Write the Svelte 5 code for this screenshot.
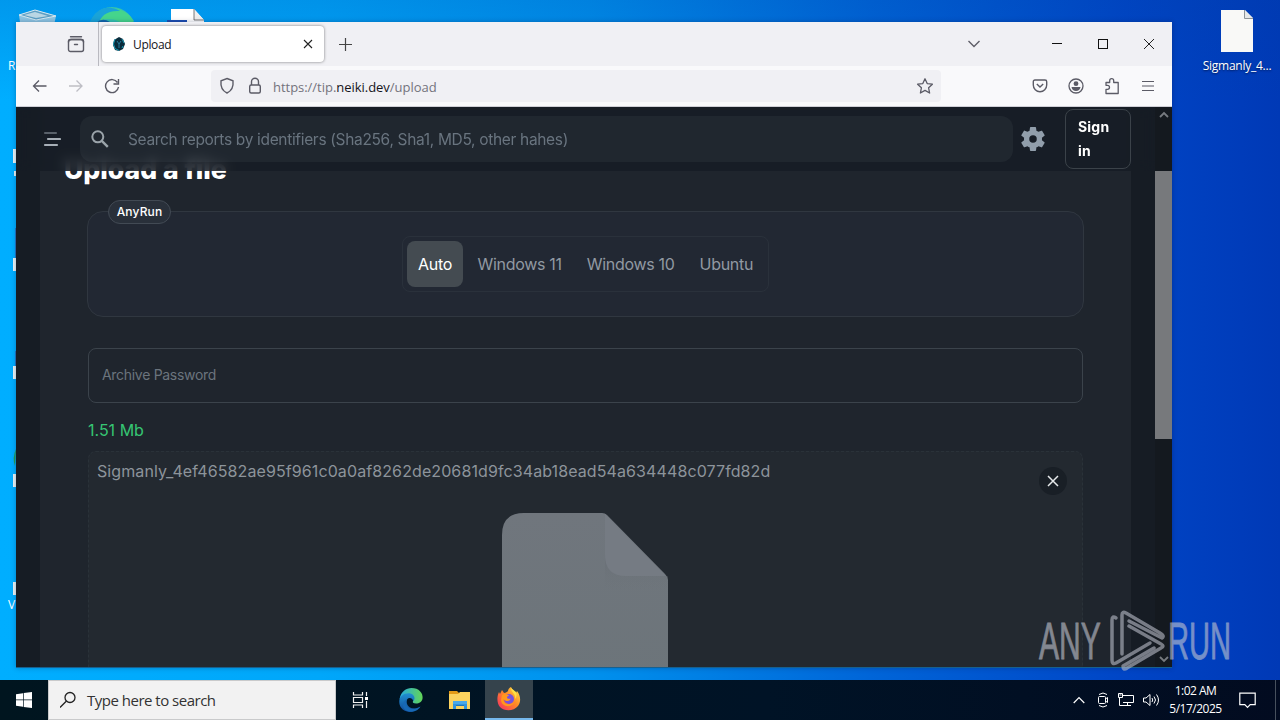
<script>
  let search = $state("");
  let password = $state("");
  let selected = $state("Auto");

  const systems = ["Auto", "Windows 11", "Windows 10", "Ubuntu"];
  const file = {
    size: "1.51 Mb",
    name: "Sigmanly_4ef46582ae95f961c0a0af8262de20681d9fc34ab18ead54a634448c077fd82d",
  };
</script>

<div class="screen">
  <div class="desktop">
    <svg class="shortcuts" width="220" height="680" viewBox="0 0 220 680">
      <path d="M19 15l16-5 21 6-3 14H21z" fill="#8fc6e3" />
      <path d="M19 15l16-5 21 6-20 4z" fill="#5d9fc4" stroke="#d5e9f2" />
      <path d="M24 15l11-3 13 4-12 2z" fill="#b9d6e4" />
      <circle cx="112" cy="30" r="23" fill="#35c3b0" />
      <path d="M90 25c6-20 32-23 44-4l-8 6c-7-8-20-12-36-2z" fill="#45d58c" />
      <path d="M89 28c2-18 18-25 31-17-12-1-20 4-22 15z" fill="#1aa3d8" />
      <path d="M96 23q6-6 14-1v6H94z" fill="#1267ad" />
      <path d="M171 9h23l10 11v10h-33z" fill="#fff" />
      <path d="M194 9v11h10" fill="#eee" stroke="#444" stroke-width=".7" />
      <path d="M167 20h20v8h-20z" fill="#1d4fb3" />
      <path d="M13 149h3v14h-3zM14 171h2v5h-2zM13 258h3v13h-3zM13 366h3v13h-3zM13 474h3v13h-3zM13 582h3v13h-3z" fill="#e9f3f5" />
      <path d="M16 449q-4 9-1 17z" fill="#269b56" />
      <path d="M15 228h1v30h-1zM15 351h1v15h-1z" fill="#2374c8" />
    </svg>
    <span class="cut-label first">R</span>
    <span class="cut-label last">V</span>

    <div class="desk-file">
      <svg width="33" height="42" viewBox="0 0 33 42">
        <path d="M0 0h24l8 8v34H0z" fill="#f9f9f7" />
        <path d="M23.500 0v8.500h8.500" fill="#e6e8e8" stroke="#8d9398" />
      </svg>
      <span>Sigmanly_4...</span>
    </div>

    <div class="window">
      <div class="tabbar">
        <div class="recent">
          <svg width="18" height="18" viewBox="0 0 18 18" fill="none" stroke="#5b5b66" stroke-width="1.400" stroke-linecap="round">
            <path d="M3.500 1.700h11" />
            <rect x="1.500" y="4.500" width="15" height="12" rx="2" />
            <path d="M1.500 7q0-2.500 3-2.500h9q3 0 3 2.500M7.500 9.500h3" />
          </svg>
        </div>
        <div class="tab">
          <svg width="14" height="16" viewBox="0 0 14 16">
            <path d="M7 1l4 2 2 5-2 5-4 2-4-1-2-5 1-5z" fill="#092c3c" />
            <path d="M3 3L1.500 8 3 12.500l4 2M10 3l2 4M10 12l1-2" fill="none" stroke="#1699b4" />
            <path d="M5 5l2 3 2-3M7 8v4" fill="none" stroke="#277b9b" />
          </svg>
          <span>Upload</span>
          <svg class="tab-close" width="10" height="10" viewBox="0 0 10 10" stroke="#222" stroke-width="1.100"><path d="M1 1l8 8M9 1L1 9" /></svg>
        </div>
        <svg class="plus" width="13" height="13" viewBox="0 0 13 13" stroke="#444" stroke-width="1.200"><path d="M6.500 0v13M0 6.500h13" /></svg>
        <div class="window-buttons">
          <svg width="14" height="12" viewBox="0 0 14 12" fill="none" stroke="#5f5e68" stroke-width="1.400"><path d="M1.500 3L7 8.500 12.500 3" /></svg>
          <svg width="12" height="12" viewBox="0 0 12 12" stroke="#111"><path d="M1 5.500h10" /></svg>
          <svg width="12" height="12" viewBox="0 0 12 12" fill="none" stroke="#111"><rect x="1.500" y="1.500" width="9" height="9" /></svg>
          <svg width="12" height="12" viewBox="0 0 12 12" stroke="#222"><path d="M1 1l10 10M11 1L1 11" /></svg>
        </div>
      </div>

      <div class="navbar">
        <div class="nav-buttons">
          <svg width="16" height="16" viewBox="0 0 16 16" fill="none" stroke="#5b5b66" stroke-width="1.300"><path d="M14.500 8H1.500M7 2.500L1.500 8 7 13.500" /></svg>
          <svg width="16" height="16" viewBox="0 0 16 16" fill="none" stroke="#bebec4" stroke-width="1.300"><path d="M1 8h13M8.500 2.500L14 8l-5.500 5.500" /></svg>
          <svg width="16" height="16" viewBox="0 0 16 16" fill="none" stroke="#5b5b66" stroke-width="1.400"><path d="M13.500 4.500A6.500 6.500 0 1 0 14.500 9M14.500 1v5h-5" /></svg>
        </div>
        <div class="url">
          <svg width="16" height="18" viewBox="0 0 16 18" fill="none" stroke="#5b5b66" stroke-width="1.400"><path d="M8 1.500l6 2.300c.6 5.500-1.300 9.900-6 12.200-4.700-2.300-6.600-6.700-6-12.200z" /></svg>
          <svg width="14" height="18" viewBox="0 0 14 18" fill="none" stroke="#5b5b66" stroke-width="1.400"><rect x="1.700" y="8" width="10.600" height="8" rx="1.500" /><path d="M3.500 8V4.800a3.500 3.500 0 0 1 7 0V8" /></svg>
          <span class="address">https://tip.<b>neiki.dev</b>/upload</span>
          <svg class="star" width="18" height="18" viewBox="0 0 18 18" fill="none" stroke="#5b5b66" stroke-width="1.300" stroke-linejoin="round"><path d="M9 1.800l2.200 4.800 5.200.6-3.800 3.600 1 5.200L9 13.400 4.400 16l1-5.200-3.800-3.600 5.200-.6z" /></svg>
        </div>
        <div class="nav-tools">
          <svg width="16" height="16" viewBox="0 0 16 16" fill="none" stroke="#5b5b66" stroke-width="1.400"><path d="M3 2h10q1.700 0 1.700 1.700V7a6.700 6.700 0 0 1-13.400 0V3.700Q1.300 2 3 2zM4.800 6L8 9l3.200-3" /></svg>
          <svg width="16" height="16" viewBox="0 0 16 16"><circle cx="8" cy="8" r="7" fill="none" stroke="#5b5b66" stroke-width="1.300" /><circle cx="8" cy="5.700" r="2.400" fill="#5b5b66" /><path d="M3.500 9h9q-.7 3.800-4.500 4-3.800-.2-4.500-4z" fill="#5b5b66" /></svg>
          <svg width="16" height="18" viewBox="0 0 16 18" fill="none" stroke="#5b5b66" stroke-width="1.300" stroke-linejoin="round"><path d="M2 16.500v-4.200h1.500a2 2 0 0 0 0-4H2V5.500h3.700V3.700a2 2 0 0 1 4 0v1.800h4.500v11z" /></svg>
          <svg width="16" height="16" viewBox="0 0 16 16" stroke="#5b5b66" stroke-width="1.200"><path d="M2 3.500h12M2 8h12M2 12.500h12" /></svg>
        </div>
      </div>

      <div class="viewport">
        <div class="page">
          <main class="card">
            <h1>Upload a file</h1>
            <section class="engine">
              <span class="legend">AnyRun</span>
              <div class="toggle">
                {#each systems as system}
                  <button class:active={system === selected} onclick={() => (selected = system)}>{system}</button>
                {/each}
              </div>
            </section>
            <input class="password" type="text" placeholder="Archive Password" bind:value={password} />
            <p class="size">{file.size}</p>
            <div class="preview">
              <div class="preview-head">
                <span class="filename">{file.name}</span>
                <button class="remove" aria-label="Remove file">
                  <svg width="12" height="12" viewBox="0 0 12 12" stroke="#e6e9eb" stroke-width="1.500"><path d="M1 1l10 10M11 1L1 11" /></svg>
                </button>
              </div>
              <svg class="document" width="167" height="222" viewBox="0 0 167 222">
                <defs>
                  <linearGradient id="paper" x2="0" y2="1">
                    <stop offset="0" stop-color="#70767d" />
                    <stop offset="1" stop-color="#6b7479" />
                  </linearGradient>
                  <linearGradient id="shade" x2="0" y2="1">
                    <stop offset="0" stop-color="#676d74" stop-opacity=".6" />
                    <stop offset="1" stop-color="#6d747a" stop-opacity="0" />
                  </linearGradient>
                </defs>
                <path d="M22 0h78q3 0 5 2l58 59q3 3 3 6v155H0V22Q0 0 22 0z" fill="url(#paper)" />
                <path d="M103 45l17 18h46v17h-63z" fill="url(#shade)" />
                <path d="M103 1l61 62h-40q-21 0-21-21z" fill="#757b83" />
              </svg>
            </div>
          </main>
        </div>

        <header class="topbar">
          <svg class="menu" width="18" height="16" viewBox="0 0 18 16" stroke-linecap="round" stroke-width="2.200"><path d="M2 2h11" stroke="#59616a" /><path d="M5 8h12M2 14h12" stroke="#a7afb7" /></svg>
          <label class="search">
            <svg width="18" height="18" viewBox="0 0 18 18" fill="none" stroke="#9ba4aa" stroke-width="2"><circle cx="6.800" cy="6.800" r="5.500" /><path d="M10.800 10.800l6 6" stroke-width="2.400" /></svg>
            <input type="text" placeholder="Search reports by identifiers (Sha256, Sha1, MD5, other hahes)" bind:value={search} />
          </label>
          <svg class="gear" width="30" height="30" viewBox="0 0 24 24" fill="#919eab"><path d="M19.140 12.940c.04-.3.06-.61.06-.94 0-.32-.02-.64-.07-.94l2.030-1.580c.18-.14.23-.41.12-.61l-1.920-3.320c-.12-.22-.37-.29-.59-.22l-2.390.96c-.5-.38-1.030-.7-1.620-.94l-.36-2.540c-.04-.24-.24-.41-.48-.41h-3.840c-.24 0-.43.17-.47.41l-.36 2.540c-.59.24-1.130.57-1.620.94l-2.390-.96c-.22-.08-.47 0-.59.22L2.740 8.870c-.12.21-.08.47.12.61l2.030 1.580c-.05.3-.09.63-.09.94s.02.64.07.94l-2.030 1.580c-.18.14-.23.41-.12.61l1.920 3.320c.12.22.37.29.59.22l2.390-.96c.5.38 1.030.7 1.620.94l.36 2.540c.05.24.24.41.48.41h3.840c.24 0 .44-.17.47-.41l.36-2.540c.59-.24 1.130-.56 1.620-.94l2.390.96c.22.08.47 0 .59-.22l1.920-3.320c.12-.22.07-.47-.12-.61zM12 15A3 3 0 1 1 12 9a3 3 0 0 1 0 6z" /></svg>
          <button class="signin">Sign in</button>
        </header>

        <div class="scrollbar">
          <svg width="10" height="8" viewBox="0 0 10 8" fill="none" stroke="#777b80" stroke-width="1.800"><path d="M1 6l4-4 4 4" /></svg>
          <div class="thumb"></div>
          <svg class="down" width="10" height="8" viewBox="0 0 10 8" fill="none" stroke="#777b80" stroke-width="1.800"><path d="M1 2l4 4 4-4" /></svg>
        </div>
      </div>
    </div>
  </div>

  <div class="taskbar">
    <button class="start" aria-label="Start">
      <svg width="16" height="16" viewBox="0 0 16 16" fill="#fff"><path d="M0 2.200L7 1.200v6.400H0zM7.700 1.100L16 0v7.600H7.700zM0 8.300h7v6.500l-7-1zM7.700 8.300H16V16l-8.300-1.100z" /></svg>
    </button>
    <div class="task-search">
      <svg width="18" height="18" viewBox="0 0 18 18" fill="none" stroke="#222" stroke-width="1.300"><circle cx="10" cy="6.500" r="5" /><path d="M6.500 10L0 16.500" /></svg>
      <span>Type here to search</span>
    </div>
    <div class="task-item">
      <svg width="18" height="18" viewBox="0 0 18 18" fill="none" stroke="#f1f1f1" stroke-width="1.200"><path d="M2.500 1v3h9V1M2.500 17v-3h9v3M2.500 6.500h9v5h-9zM15.500 1v4M15.500 10v7" /><path d="M14 6h3v3h-3z" fill="#fff" stroke="none" /></svg>
    </div>
    <div class="task-item">
      <svg width="24" height="24" viewBox="0 0 24 24">
        <defs>
          <linearGradient id="edge-top"><stop stop-color="#25a9e0" /><stop offset="1" stop-color="#63d657" /></linearGradient>
          <linearGradient id="edge-side" x2="0" y2="1"><stop stop-color="#2191d1" /><stop offset="1" stop-color="#114a9b" /></linearGradient>
        </defs>
        <path d="M.6 11C2 3.500 7 0 12.500 0 20 0 24 5 23.600 10c-.4 4-3.500 5.500-6.500 5.500-2.800 0-4-1-3-2.400 1.500-2.600-.4-5.600-4-5.600-4 0-7.500 1-9.500 3.500z" fill="url(#edge-top)" />
        <path d="M.4 12C1 8 5 5.200 9.500 5.200c3.500 0 6 2.300 6 4.800 0 1.300-.5 2.200-1.200 3-.6-2-2-3-3.600-3C8 10 7 13 8 16c1.200 3.600 5.500 5.500 10.500 4C14 25.500 6 25 2 19.500 .5 17.300 0 14.500.4 12z" fill="url(#edge-side)" />
        <path d="M8 11c-3 6 1.500 11 9 9.500l4.500-2c-2.500 4.500-9 6.500-13.500 4.500C2 20 3.500 13 8 11z" fill="#1768b5" />
      </svg>
    </div>
    <div class="task-item">
      <svg width="22" height="20" viewBox="0 0 22 20"><path d="M0 1h8l2 2v5H0z" fill="#e49b17" /><path d="M0 4h9l2-2h10v17H0z" fill="#fcd35f" /><path d="M4 11h14v8h-3v-4H7v4H4z" fill="#3294dc" /><path d="M4 11h14v3H4z" fill="#4aa8e9" /><path d="M7 15h8v1H7z" fill="#2174b7" /></svg>
    </div>
    <div class="task-item current">
      <svg width="24" height="24" viewBox="0 0 24 24">
        <defs>
          <linearGradient id="fox" x1="1" x2="0" y2="1"><stop stop-color="#ffe950" /><stop offset=".45" stop-color="#ff8b25" /><stop offset="1" stop-color="#f52968" /></linearGradient>
        </defs>
        <path d="M14 0c1 3 4 4 5 6l1-2c4 5 4 11 1 15-4 5-13 6-18 1C0 17-.5 10 2 5l1 2L5 3l2 3c2-.4 3-1 4-2 .5-2 1-3 3-4z" fill="url(#fox)" />
        <circle cx="12" cy="12" r="5" fill="#7652de" />
        <path d="M5 8c2-1.500 5-1 7 .5-1 .6-2 .7-2 2 0 1.300 2 1.500 3.500 1-.5 3-5 3.500-7 .5 0 6 7.500 7 11 2-1 7-13 7-13.500-1z" fill="#ff981d" />
        <path d="M14 1c0 5 5 5 4 11 2-2 2-5 1-7z" fill="#ffdf45" />
      </svg>
    </div>
    <div class="tray">
      <svg width="12" height="8" viewBox="0 0 12 8" fill="none" stroke="#fff" stroke-width="1.200"><path d="M.7 7L6 1.500 11.300 7" /></svg>
      <svg width="12" height="16" viewBox="0 0 12 16" fill="none" stroke="#fff"><rect x="1.500" y="4.500" width="7" height="7" rx="1" /><path d="M8.500 7l2-1.500v5L8.500 9M2 2.500q4-3 8 0M2 13.500q4 3 8 0" /></svg>
      <svg width="16" height="14" viewBox="0 0 16 14" fill="none" stroke="#fff"><path d="M5 2.500h10.500v7H5M1.500 5v7.500H10M9.500 9.500v3M6 12.500h7M.5.500h4v4h-4zM1.500 2h2" /></svg>
      <svg width="17" height="14" viewBox="0 0 17 14" fill="none" stroke="#fff"><path d="M.5 5v4H3l4 3.500v-11L3 5zM9 5q1.500 2 0 4M11 3.500q3 3.500 0 7M13.500 1.500q4 5.500 0 11" /></svg>
      <div class="clock"><span>1:02 AM</span><span>5/17/2025</span></div>
      <svg class="note" width="17" height="17" viewBox="0 0 17 17" fill="none" stroke="#fff" stroke-width="1.200"><path d="M.8 1.200h15.400v11.500h-5L8.500 15.400l-2.700-2.700h-5z" /></svg>
    </div>
    <div class="show-desktop"></div>
  </div>

  <svg class="watermark" width="210" height="70" viewBox="0 0 210 70" fill="none" opacity=".6">
    <g fill="#c4c6d0" stroke="#c4c6d0" stroke-width=".8" font-family="'Liberation Sans', sans-serif" font-size="51">
      <text transform="translate(1 50) scale(.65 1)" textLength="95" lengthAdjust="spacingAndGlyphs">ANY</text>
      <text transform="translate(130 50) scale(.65 1)" textLength="97" lengthAdjust="spacingAndGlyphs">RUN</text>
    </g>
    <g stroke="#b9bdc8" stroke-width="3.500" stroke-linejoin="round" stroke-linecap="round">
      <path d="M78 9q-4-3-4 2v40q0 5 4 3l34-20" />
      <path d="M84 45V6q0-4 4-2l34 20q5 3 2 5l-33-17" />
      <path d="M91 17l32 18q4 2 0 4L89 59q-4 3-4-2l31-18" />
    </g>
  </svg>
</div>

<style>
  :global(body) {
    overflow: hidden;
  }

  .screen {
    position: relative;
    display: flex;
    flex-direction: column;
    width: 1280px;
    height: 720px;
    overflow: hidden;
    font-family: "Open Sans", "Noto Sans", sans-serif;
  }

  .screen * {
    box-sizing: border-box;
  }

  .screen svg {
    flex: none;
    display: block;
  }

  button {
    padding: 0;
    border: none;
    background: none;
    font: inherit;
    color: inherit;
  }

  .desktop {
    position: relative;
    height: 680px;
    background:
      linear-gradient(180deg, rgba(0, 65, 165, 0.2), transparent 100px),
      linear-gradient(90deg, #00aeff, #00a7fa 25%, #0091ed 46%, #0065d8 68%, #0045c6 88%, #0039b6);
  }

  .shortcuts {
    position: absolute;
    top: 0;
    left: 0;
  }

  .cut-label {
    position: absolute;
    left: 8px;
    color: #fff;
    font-size: 12px;
    line-height: 16px;
  }

  .cut-label.first {
    top: 58px;
  }

  .cut-label.last {
    top: 597px;
  }

  .desk-file {
    position: absolute;
    top: 10px;
    left: 1199px;
    width: 76px;
    display: flex;
    flex-direction: column;
    align-items: center;
    gap: 6px;
    color: #fff;
    font-size: 12px;
    line-height: 16px;
    letter-spacing: -0.25px;
    text-shadow: 0 1px 2px #001a55;
  }

  .window {
    position: absolute;
    top: 22px;
    left: 16px;
    width: 1156px;
    height: 646px;
    display: flex;
    flex-direction: column;
    background: #161c24;
    border-bottom: 1px solid #17608f;
    box-shadow: 0 0 5px rgba(0, 20, 60, 0.3);
  }

  .tabbar {
    display: flex;
    align-items: center;
    height: 44px;
    background: #f0f0f4;
  }

  .recent {
    display: flex;
    align-items: center;
    justify-content: flex-end;
    width: 83px;
    height: 44px;
    padding-right: 13px;
    border-right: 1px solid #b9b9c0;
  }

  .tab {
    display: flex;
    align-items: center;
    width: 222px;
    height: 36px;
    margin-left: 3px;
    padding: 0 11px 0 10px;
    border-radius: 4px;
    background: #fff;
    box-shadow: 0 0 3px rgba(0, 0, 0, 0.5);
    color: #15141a;
    font-size: 12px;
    letter-spacing: -0.35px;
  }

  .tab span {
    margin-left: 7px;
  }

  .tab-close {
    margin-left: auto;
  }

  .plus {
    margin-left: 15px;
  }

  .window-buttons {
    display: flex;
    align-items: center;
    gap: 34px;
    margin-left: auto;
    padding-right: 17px;
  }

  .window-buttons svg:first-child {
    margin-right: 36px;
  }

  .navbar {
    display: flex;
    align-items: center;
    height: 41px;
    background: #f9f9fb;
    border-bottom: 1px solid #cfcfd6;
  }

  .nav-buttons {
    display: flex;
    gap: 20px;
    width: 195px;
    padding-left: 16px;
  }

  .url {
    display: flex;
    align-items: center;
    width: 730px;
    height: 32px;
    padding: 0 7px 0 8px;
    gap: 13px;
    border-radius: 4px;
    background: #f0f0f4;
  }

  .address {
    margin: 2px 0 0 -2px;
    color: #74737c;
    font-size: 13px;
    letter-spacing: -0.03px;
  }

  .address b {
    color: #15141a;
    font-weight: 400;
  }

  .star {
    margin-left: auto;
  }

  .nav-tools {
    display: flex;
    align-items: center;
    gap: 20px;
    margin-left: auto;
    padding-right: 16px;
  }

  .viewport {
    position: relative;
    display: flex;
    flex: 1;
    min-height: 0;
    overflow: hidden;
    font-family: Inter, "Liberation Sans", sans-serif;
  }

  .page {
    flex: 1;
    padding: 0 24px;
    overflow: hidden;
    background: #161c24;
  }

  .card {
    height: 620px;
    padding: 42px 47px 0 48px;
    background: #1f252d;
  }

  h1 {
    margin: 0 0 0 -24px;
    color: #fff;
    font-size: 26.600px;
    font-weight: 800;
    line-height: 40px;
    letter-spacing: 0;
  }

  .engine {
    position: relative;
    display: flex;
    justify-content: center;
    align-items: center;
    width: 997px;
    height: 106px;
    margin: 22px 0 31px -1px;
    border: 1px solid #303740;
    border-radius: 16px;
    background: #222833;
  }

  .legend {
    position: absolute;
    top: -12px;
    left: 20px;
    width: 63px;
    height: 24px;
    border: 1px solid #424a54;
    border-radius: 12px;
    background: #29303a;
    color: #fff;
    font-size: 12px;
    font-weight: 500;
    line-height: 22px;
    letter-spacing: 0.15px;
    text-align: center;
  }

  .toggle {
    display: flex;
    gap: 4px;
    width: 367px;
    height: 56px;
    padding: 4px;
    border: 1px solid #2a313b;
    border-radius: 8px;
  }

  .toggle button {
    height: 46px;
    padding: 0 10.500px;
    border-radius: 8px;
    color: #9199a2;
    font-size: 16px;
    letter-spacing: -0.3px;
    white-space: nowrap;
  }

  .toggle .active {
    width: 56px;
    background: #444b51;
    color: #fff;
  }

  .password {
    display: block;
    width: 995px;
    height: 55px;
    padding: 0 13px 2px;
    border: 1px solid #3b434b;
    border-radius: 8px;
    outline: none;
    background: transparent;
    color: #fff;
    font: 14px Inter, sans-serif;
    letter-spacing: -0.3px;
  }

  .password::placeholder {
    color: #6b747d;
  }

  .size {
    margin: 15px 0 9px;
    color: #36c573;
    font-size: 16px;
    line-height: 24px;
  }

  .preview {
    display: flex;
    flex-direction: column;
    align-items: center;
    width: 995px;
    height: 260px;
    border: 1px dashed #2a3239;
    border-radius: 8px;
    background: #232930;
  }

  .preview-head {
    display: flex;
    justify-content: space-between;
    align-self: stretch;
    padding: 7px 15px 0 8px;
  }

  .filename {
    color: #8d949b;
    font-size: 16px;
    line-height: 24px;
    letter-spacing: 0.1px;
  }

  .remove {
    display: flex;
    align-items: center;
    justify-content: center;
    width: 28px;
    height: 28px;
    margin-top: 8px;
    border-radius: 50%;
    background: #191f26;
  }

  .document {
    margin: 18px 1px 0 0;
  }

  .topbar {
    position: absolute;
    top: 0;
    left: 0;
    display: flex;
    align-items: center;
    width: 1139px;
    height: 64px;
    padding: 0 24px 0 27px;
    background: rgba(22, 28, 36, 0.82);
    backdrop-filter: blur(6px);
  }

  .search {
    display: flex;
    align-items: center;
    gap: 19px;
    width: 933px;
    height: 46px;
    margin-left: 19px;
    padding-left: 11px;
    border-radius: 12px;
    background: rgba(145, 158, 171, 0.08);
  }

  .search input {
    width: 700px;
    padding: 0;
    border: none;
    outline: none;
    background: transparent;
    color: #fff;
    font: 15.500px Inter, sans-serif;
    letter-spacing: -0.33px;
  }

  .search input::placeholder {
    color: #69747f;
  }

  .gear {
    margin-left: 5px;
  }

  .signin {
    width: 66px;
    height: 60px;
    margin-left: auto;
    padding: 0 12px;
    border: 1px solid #3b4249;
    border-radius: 8px;
    color: #fff;
    font-size: 14px;
    font-weight: 700;
    line-height: 24px;
    letter-spacing: 0.2px;
    text-align: left;
  }

  .scrollbar {
    display: flex;
    flex-direction: column;
    align-items: center;
    width: 17px;
    padding: 4px 0;
    background: #14191f;
  }

  .thumb {
    width: 17px;
    height: 268px;
    margin-top: 52px;
    background: #77797c;
  }

  .down {
    margin-top: auto;
  }

  .taskbar {
    display: flex;
    align-items: center;
    height: 40px;
    background: linear-gradient(90deg, #00151f, #001326 60%, #020b20);
  }

  .start {
    display: flex;
    align-items: center;
    justify-content: center;
    width: 48px;
    height: 40px;
  }

  .task-search {
    display: flex;
    align-items: center;
    gap: 9px;
    width: 288px;
    height: 40px;
    padding-left: 11px;
    border: 1px solid #c9cacb;
    background: #f2f2f2;
    color: #333;
    font-size: 15px;
    letter-spacing: -0.5px;
  }

  .task-item {
    display: flex;
    align-items: center;
    justify-content: center;
    width: 48px;
    height: 40px;
  }

  .task-item:nth-child(4) {
    width: 54px;
  }

  .task-item:nth-child(5) {
    width: 47px;
    padding-right: 3px;
  }

  .current {
    border-bottom: 2px solid #76b9ed;
    background: #35434c;
  }

  .tray {
    display: flex;
    align-items: center;
    gap: 9px;
    margin-left: auto;
    color: #fff;
  }

  .tray svg:first-child {
    margin-right: 3px;
  }

  .clock {
    display: flex;
    flex-direction: column;
    align-items: center;
    width: 53px;
    font-size: 12px;
    line-height: 18px;
    letter-spacing: -0.5px;
    white-space: nowrap;
  }

  .note {
    margin-left: 8px;
  }

  .show-desktop {
    width: 5px;
    height: 40px;
    margin-left: 19px;
    border-left: 1px solid #47505d;
  }

  .watermark {
    position: absolute;
    top: 609px;
    left: 1038px;
  }
</style>
